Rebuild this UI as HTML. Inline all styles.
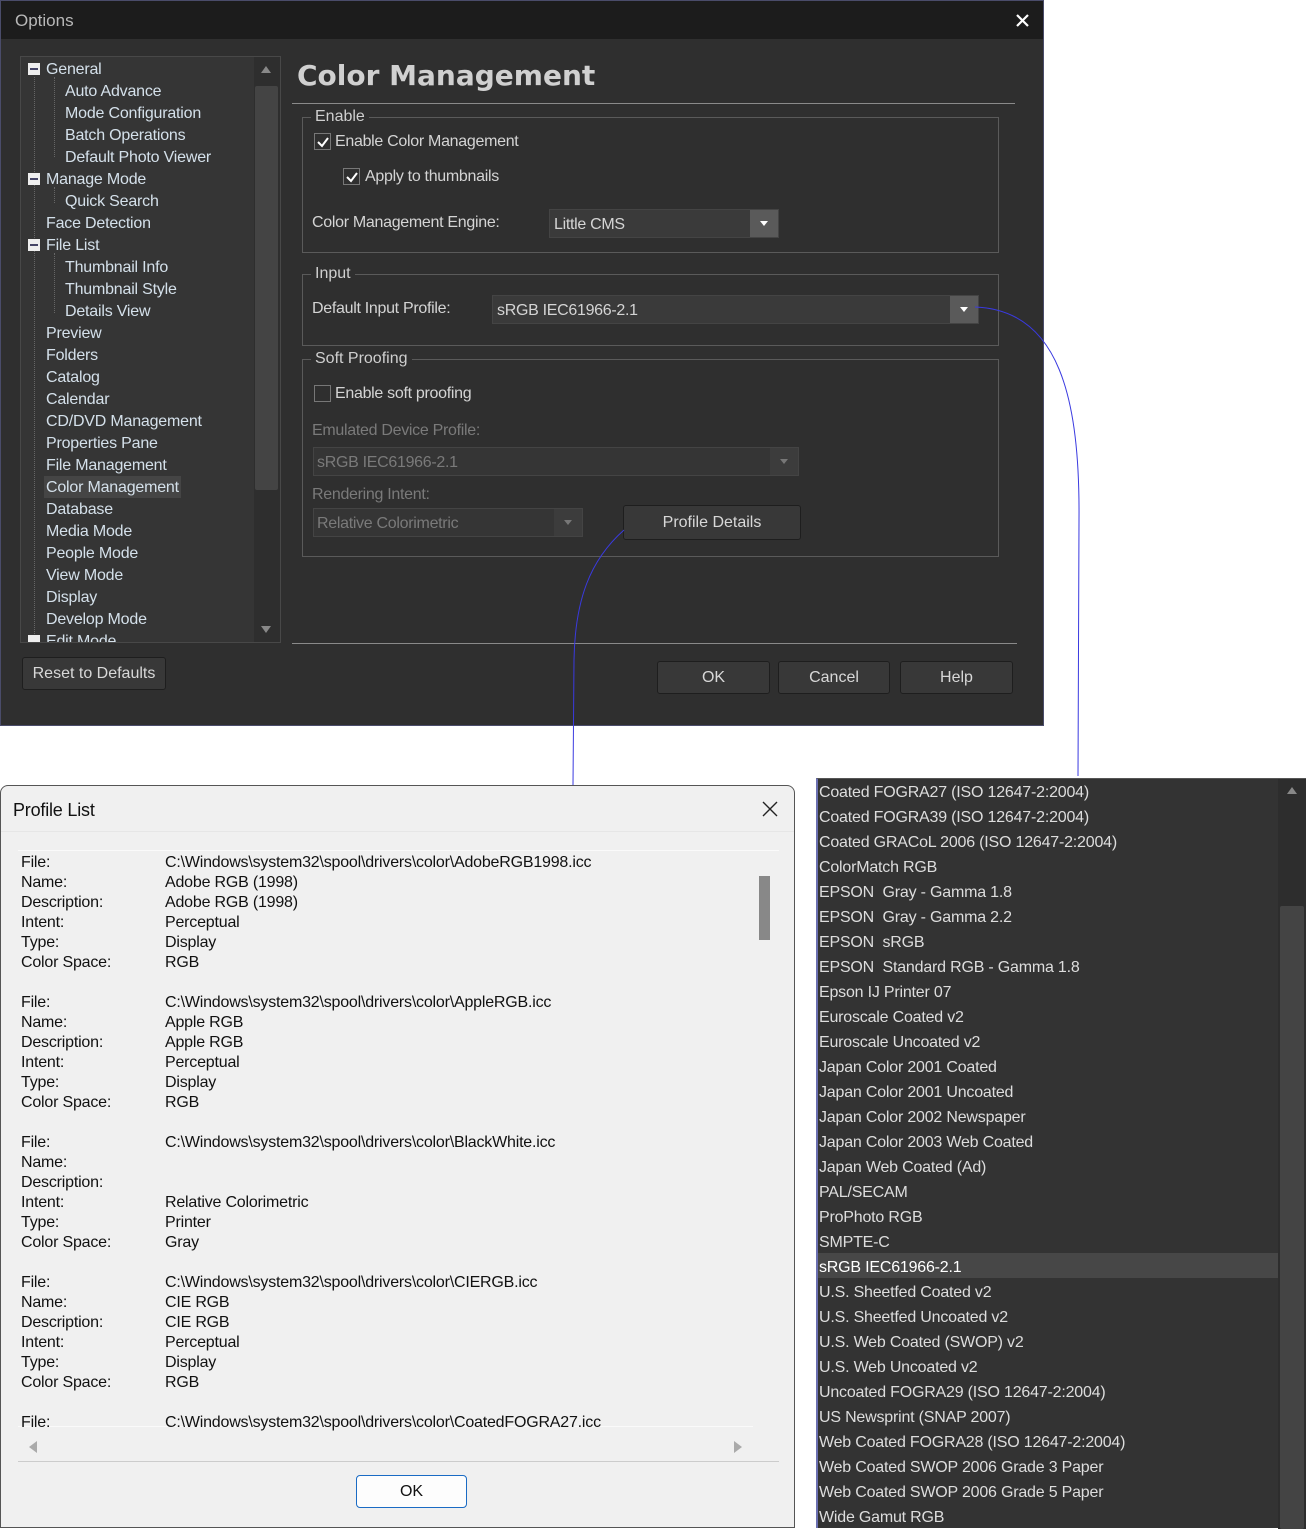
<!DOCTYPE html>
<html><head><meta charset="utf-8"><style>
*{margin:0;padding:0;box-sizing:border-box}
body{width:1306px;height:1528px;background:#fff;position:relative;overflow:hidden;font-family:"Liberation Sans",sans-serif}
.a{position:absolute}
.t{position:absolute;white-space:nowrap;font-size:16px;line-height:20px}
.dlg{left:0;top:0;width:1044px;height:726px;background:#2f2f2f;border:1px solid #4a4c6a}
.tb{left:0;top:0;width:1042px;height:38px;background:#1c1c1c}
.c{color:#d4d4d4;letter-spacing:-0.3px}
.tree{left:19px;top:55px;width:261px;height:587px;background:#353535;border:1px solid #484848;overflow:hidden}
.tree .t{color:#d4e0ea;letter-spacing:-0.2px}
.grp{position:absolute;border:1px solid #5a5a5a}
.lg{position:absolute;background:#2f2f2f;padding:0 4px;color:#cfcfcf;font-size:16px;line-height:20px}
.cb{position:absolute;width:17px;height:17px;border:1px solid #777;background:#2f2f2f}
.cb svg{position:absolute;left:1px;top:1px}
.dd{position:absolute;background:#3a3a3a;border:1px solid #444}
.dd .ar{position:absolute;right:0;top:0;bottom:0;width:28px;background:#5a5a5a}
.btn{position:absolute;background:#383838;border:1px solid #1e1e1e;border-radius:3px;color:#d8d8d8;font-size:16px;text-align:center}
.pl{left:0;top:785px;width:795px;height:743px;background:#f0f0f0;border:1px solid #555;border-radius:8px 8px 0 0}
.pl .t{color:#111;font-size:16px;line-height:20px;letter-spacing:-0.2px}
.ls{left:816px;top:778px;width:490px;height:750px;background:#333;border-left:2px solid #6a6fb0;border-top:1px solid #555}
.ls .t{color:#ddd;font-size:16px;line-height:25px;left:1px;letter-spacing:-0.2px}
</style></head><body>
<div class="a dlg">
 <div class="a tb"><div class="t" style="left:14px;top:10px;color:#b8b8b8;font-size:17px">Options</div>
 <svg class="a" style="left:1015px;top:13px" width="13" height="13"><path d="M1 1L12 12M12 1L1 12" stroke="#fff" stroke-width="2.2"/></svg></div>
 <div class="a tree">
  <div class="a" style="left:233px;top:0;width:26px;height:585px;background:#2e2e2e"></div>
  <div class="a" style="left:234px;top:29px;width:23px;height:404px;background:#444;border-radius:2px"></div>
  <svg class="a" style="left:240px;top:9px" width="10" height="7"><path d="M0 7L5 0L10 7Z" fill="#888"/></svg>
  <svg class="a" style="left:240px;top:569px" width="10" height="7"><path d="M0 0L5 7L10 0Z" fill="#888"/></svg>
  <div class="a" style="left:13px;top:20px;height:565px;border-left:1px dotted #666"></div>
  <div class="a" style="left:33px;top:20px;height:80px;border-left:1px dotted #666"></div>
  <div class="a" style="left:33px;top:130px;height:16px;border-left:1px dotted #666"></div>
  <div class="a" style="left:33px;top:196px;height:60px;border-left:1px dotted #666"></div>
  <div class="a" style="left:7px;top:6px;width:12px;height:12px;background:#eee"><div class="a" style="left:2px;top:5px;width:8px;height:2px;background:#446"></div></div>
  <div class="a" style="left:7px;top:116px;width:12px;height:12px;background:#eee"><div class="a" style="left:2px;top:5px;width:8px;height:2px;background:#446"></div></div>
  <div class="a" style="left:7px;top:182px;width:12px;height:12px;background:#eee"><div class="a" style="left:2px;top:5px;width:8px;height:2px;background:#446"></div></div>
  <div class="a" style="left:7px;top:578px;width:12px;height:12px;background:#eee"></div>
  <div class="a" style="left:23px;top:419px;width:137px;height:22px;background:#454545"></div>
  <div class="t" style="left:25px;top:3px">General</div>
  <div class="t" style="left:44px;top:25px">Auto Advance</div>
  <div class="t" style="left:44px;top:47px">Mode Configuration</div>
  <div class="t" style="left:44px;top:69px">Batch Operations</div>
  <div class="t" style="left:44px;top:91px">Default Photo Viewer</div>
  <div class="t" style="left:25px;top:113px">Manage Mode</div>
  <div class="t" style="left:44px;top:135px">Quick Search</div>
  <div class="t" style="left:25px;top:157px">Face Detection</div>
  <div class="t" style="left:25px;top:179px">File List</div>
  <div class="t" style="left:44px;top:201px">Thumbnail Info</div>
  <div class="t" style="left:44px;top:223px">Thumbnail Style</div>
  <div class="t" style="left:44px;top:245px">Details View</div>
  <div class="t" style="left:25px;top:267px">Preview</div>
  <div class="t" style="left:25px;top:289px">Folders</div>
  <div class="t" style="left:25px;top:311px">Catalog</div>
  <div class="t" style="left:25px;top:333px">Calendar</div>
  <div class="t" style="left:25px;top:355px">CD/DVD Management</div>
  <div class="t" style="left:25px;top:377px">Properties Pane</div>
  <div class="t" style="left:25px;top:399px">File Management</div>
  <div class="t" style="left:25px;top:421px">Color Management</div>
  <div class="t" style="left:25px;top:443px">Database</div>
  <div class="t" style="left:25px;top:465px">Media Mode</div>
  <div class="t" style="left:25px;top:487px">People Mode</div>
  <div class="t" style="left:25px;top:509px">View Mode</div>
  <div class="t" style="left:25px;top:531px">Display</div>
  <div class="t" style="left:25px;top:553px">Develop Mode</div>
  <div class="t" style="left:25px;top:575px">Edit Mode</div>
 </div>
 <div class="t" style="left:296px;top:58px;font:bold 28px/34px 'DejaVu Sans',sans-serif;color:#d0d0d0">Color Management</div>
 <div class="a" style="left:291px;top:102px;width:723px;height:1px;background:#8a8a8a"></div>
 <div class="grp" style="left:301px;top:116px;width:697px;height:136px"></div><div class="lg" style="left:310px;top:106px">Enable</div>
 <div class="cb" style="left:313px;top:132px"><svg width="14" height="14"><path d="M2 7L6 11L12 3" stroke="#fff" stroke-width="2" fill="none"/></svg></div>
 <div class="t c" style="left:334px;top:131px">Enable Color Management</div>
 <div class="cb" style="left:342px;top:167px"><svg width="14" height="14"><path d="M2 7L6 11L12 3" stroke="#fff" stroke-width="2" fill="none"/></svg></div>
 <div class="t c" style="left:364px;top:166px">Apply to thumbnails</div>
 <div class="t c" style="left:311px;top:212px">Color Management Engine:</div>
 <div class="dd" style="left:548px;top:208px;width:230px;height:29px"><div class="t c" style="left:4px;top:5px">Little CMS</div><div class="ar"><svg style="margin:11px 0 0 10px" width="8" height="5"><path d="M0 0L4 5L8 0Z" fill="#fff"/></svg></div></div>
 <div class="grp" style="left:301px;top:273px;width:697px;height:72px"></div><div class="lg" style="left:310px;top:263px">Input</div>
 <div class="t c" style="left:311px;top:298px">Default Input Profile:</div>
 <div class="dd" style="left:491px;top:294px;width:487px;height:29px"><div class="t c" style="left:4px;top:5px">sRGB IEC61966-2.1</div><div class="ar"><svg style="margin:11px 0 0 10px" width="8" height="5"><path d="M0 0L4 5L8 0Z" fill="#fff"/></svg></div></div>
 <div class="grp" style="left:301px;top:358px;width:697px;height:198px"></div><div class="lg" style="left:310px;top:348px">Soft Proofing</div>
 <div class="cb" style="left:313px;top:384px"></div>
 <div class="t c" style="left:334px;top:383px">Enable soft proofing</div>
 <div class="t" style="left:311px;top:420px;color:#7a7a7a;letter-spacing:-0.3px">Emulated Device Profile:</div>
 <div class="dd" style="left:312px;top:446px;width:486px;height:29px;background:#353535"><div class="t" style="left:3px;top:5px;color:#7a7a7a;letter-spacing:-0.3px">sRGB IEC61966-2.1</div><div class="ar" style="background:#3c3c3c"><svg style="margin:11px 0 0 10px" width="8" height="5"><path d="M0 0L4 5L8 0Z" fill="#777"/></svg></div></div>
 <div class="t" style="left:311px;top:484px;color:#7a7a7a;letter-spacing:-0.3px">Rendering Intent:</div>
 <div class="dd" style="left:312px;top:507px;width:270px;height:29px;background:#353535"><div class="t" style="left:3px;top:5px;color:#7a7a7a;letter-spacing:-0.3px">Relative Colorimetric</div><div class="ar" style="background:#3c3c3c"><svg style="margin:11px 0 0 10px" width="8" height="5"><path d="M0 0L4 5L8 0Z" fill="#777"/></svg></div></div>
 <div class="btn" style="left:622px;top:504px;width:178px;height:35px;line-height:33px">Profile Details</div>
 <div class="a" style="left:291px;top:642px;width:725px;height:1px;background:#8a8a8a"></div>
 <div class="btn" style="left:21px;top:656px;width:144px;height:33px;line-height:31px">Reset to Defaults</div>
 <div class="btn" style="left:656px;top:660px;width:113px;height:33px;line-height:31px">OK</div>
 <div class="btn" style="left:777px;top:660px;width:112px;height:33px;line-height:31px">Cancel</div>
 <div class="btn" style="left:899px;top:660px;width:113px;height:33px;line-height:31px">Help</div>
</div>
<svg class="a" style="left:0;top:0" width="1306" height="790"><path d="M624 530C590 560 575 600 574 660L573 785" stroke="#3a3ae0" fill="none"/><path d="M975 307C1060 310 1080 400 1079 520L1078 776" stroke="#3a3ae0" fill="none"/></svg>
<div class="a pl">
 <div class="t" style="left:12px;top:13px;font-size:18px;line-height:22px">Profile List</div>
 <svg class="a" style="left:761px;top:15px" width="16" height="16"><path d="M1 1L15 15M15 1L1 15" stroke="#222" stroke-width="1.4"/></svg>
 <div class="a" style="left:0;top:45px;width:793px;height:1px;background:#e6e6e6"></div>
 <div class="a" style="left:17px;top:64px;width:761px;height:612px;background:#f0f0f0;border-bottom:1px solid #ccc;border-top:1px solid #fafafa"></div>
 <div class="a" style="left:758px;top:90px;width:11px;height:64px;background:#888"></div>
 <div class="a" style="left:17px;top:640px;width:735px;height:1px;background:#fafafa"></div>
 <svg class="a" style="left:28px;top:655px" width="8" height="12"><path d="M8 0L0 6L8 12Z" fill="#aaa"/></svg>
 <svg class="a" style="left:733px;top:655px" width="8" height="12"><path d="M0 0L8 6L0 12Z" fill="#aaa"/></svg>
 <div class="t" style="left:20px;top:67px;line-height:20px">File:<br>Name:<br>Description:<br>Intent:<br>Type:<br>Color Space:<br><br>File:<br>Name:<br>Description:<br>Intent:<br>Type:<br>Color Space:<br><br>File:<br>Name:<br>Description:<br>Intent:<br>Type:<br>Color Space:<br><br>File:<br>Name:<br>Description:<br>Intent:<br>Type:<br>Color Space:<br><br>File:</div>
 <div class="t" style="left:164px;top:67px;line-height:20px">C:\Windows\system32\spool\drivers\color\AdobeRGB1998.icc<br>Adobe RGB (1998)<br>Adobe RGB (1998)<br>Perceptual<br>Display<br>RGB<br><br>C:\Windows\system32\spool\drivers\color\AppleRGB.icc<br>Apple RGB<br>Apple RGB<br>Perceptual<br>Display<br>RGB<br><br>C:\Windows\system32\spool\drivers\color\BlackWhite.icc<br><br><br>Relative Colorimetric<br>Printer<br>Gray<br><br>C:\Windows\system32\spool\drivers\color\CIERGB.icc<br>CIE RGB<br>CIE RGB<br>Perceptual<br>Display<br>RGB<br><br>C:\Windows\system32\spool\drivers\color\CoatedFOGRA27.icc</div>
 <div class="a" style="left:355px;top:689px;width:111px;height:33px;background:#fdfdfd;border:1px solid #1a6bc4;border-radius:4px;text-align:center;line-height:31px;font-size:16px;color:#111">OK</div>
</div>
<div class="a ls">
 <div class="a" style="left:0;top:474px;width:460px;height:25px;background:#474747"></div>
 <div class="a" style="left:460px;top:0;width:28px;height:750px;background:#2d2d2d"></div>
 <div class="a" style="left:462px;top:127px;width:24px;height:623px;background:#444;border-radius:2px"></div>
 <svg class="a" style="left:469px;top:8px" width="10" height="7"><path d="M0 7L5 0L10 7Z" fill="#888"/></svg>
 <div class="t" style="top:1px">Coated FOGRA27 (ISO 12647-2:2004)<br>Coated FOGRA39 (ISO 12647-2:2004)<br>Coated GRACoL 2006 (ISO 12647-2:2004)<br>ColorMatch RGB<br>EPSON&nbsp; Gray - Gamma 1.8<br>EPSON&nbsp; Gray - Gamma 2.2<br>EPSON&nbsp; sRGB<br>EPSON&nbsp; Standard RGB - Gamma 1.8<br>Epson IJ Printer 07<br>Euroscale Coated v2<br>Euroscale Uncoated v2<br>Japan Color 2001 Coated<br>Japan Color 2001 Uncoated<br>Japan Color 2002 Newspaper<br>Japan Color 2003 Web Coated<br>Japan Web Coated (Ad)<br>PAL/SECAM<br>ProPhoto RGB<br>SMPTE-C<br><span style="color:#fff">sRGB IEC61966-2.1</span><br>U.S. Sheetfed Coated v2<br>U.S. Sheetfed Uncoated v2<br>U.S. Web Coated (SWOP) v2<br>U.S. Web Uncoated v2<br>Uncoated FOGRA29 (ISO 12647-2:2004)<br>US Newsprint (SNAP 2007)<br>Web Coated FOGRA28 (ISO 12647-2:2004)<br>Web Coated SWOP 2006 Grade 3 Paper<br>Web Coated SWOP 2006 Grade 5 Paper<br>Wide Gamut RGB</div>
</div>
</body></html>
